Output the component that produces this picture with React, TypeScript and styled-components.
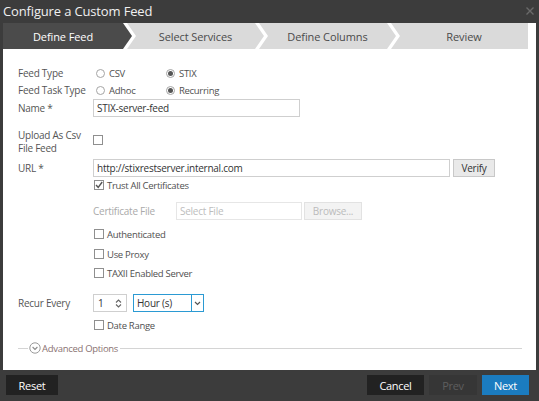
import React from "react";
import styled, { createGlobalStyle } from "styled-components";

const GlobalStyle = createGlobalStyle`
  html, body {
    margin: 0;
    padding: 0;
    background: #3c3c3c;
    font-family: "Open Sans", "Liberation Sans", sans-serif;
  }
`;

const Dialog = styled.div`
  width: 539px;
  height: 401px;
  background: #3c3c3c;
  display: flex;
  flex-direction: column;
  overflow: hidden;
`;

const TitleBar = styled.div`
  height: 23px;
  display: flex;
  align-items: center;
  justify-content: space-between;
  padding: 0 5px 1px 3px;
  box-sizing: border-box;
  color: #f0f0f0;
  font-size: 13px;
  letter-spacing: -0.15px;
`;

const Frame = styled.div`
  flex: 1;
  margin: 0 3px;
  background: #fff;
  display: flex;
  flex-direction: column;
`;

const Tabs = styled.div`
  height: 26px;
  margin-right: 8px;
  display: flex;
`;

const Tab = styled.div<{ $active?: boolean; $first?: boolean; $last?: boolean }>`
  flex: ${(p) => (p.$first ? "0 0 129px" : "0 0 137px")};
  margin-left: ${(p) => (p.$first ? "0" : "-5px")};
  background: ${(p) => (p.$active ? "#4b4b4b" : "#dadada")};
  color: ${(p) => (p.$active ? "#fff" : "#4a4a4a")};
  font-size: 11px;
  letter-spacing: -0.1px;
  display: flex;
  align-items: center;
  justify-content: center;
  padding-left: ${(p) => (p.$first ? "0" : "9px")};
  padding-right: ${(p) => (p.$last ? "0" : "9px")};
  box-sizing: border-box;
  clip-path: ${(p) =>
    p.$first
      ? "polygon(0 0, calc(100% - 9px) 0, 100% 50%, calc(100% - 9px) 100%, 0 100%)"
      : p.$last
      ? "polygon(0 0, 100% 0, 100% 100%, 0 100%, 9px 50%)"
      : "polygon(0 0, calc(100% - 9px) 0, 100% 50%, calc(100% - 9px) 100%, 0 100%, 9px 50%)"};
`;

const Form = styled.div`
  padding: 0 14px 0 15px;
  display: flex;
  flex-direction: column;
  font-size: 10px;
  letter-spacing: -0.25px;
  color: #555;
`;

const Row = styled.div<{ $mt: number; $h: number }>`
  display: flex;
  align-items: center;
  margin-top: ${(p) => p.$mt}px;
  height: ${(p) => p.$h}px;
`;

const Label = styled.div`
  width: 75px;
  flex: 0 0 75px;
  line-height: 13px;
  white-space: nowrap;
`;

const Indent = styled.div`
  width: 75px;
  flex: 0 0 75px;
`;

const RadioOption = styled.label<{ $w?: number }>`
  display: flex;
  align-items: center;
  gap: 4px;
  width: ${(p) => (p.$w ? `${p.$w}px` : "auto")};
  margin-left: 3px;
  font-size: 9.5px;
  letter-spacing: -0.3px;
  color: #505050;
`;

const RadioDot = styled.span<{ $on?: boolean }>`
  width: 9px;
  height: 9px;
  border-radius: 50%;
  border: 1px solid #a5a5a5;
  box-sizing: border-box;
  display: flex;
  align-items: center;
  justify-content: center;
  &::after {
    content: "";
    width: 5px;
    height: 5px;
    border-radius: 50%;
    background: ${(p) => (p.$on ? "#555" : "transparent")};
  }
`;

const CheckOption = styled.label`
  display: flex;
  align-items: center;
  gap: 2px;
  margin-left: 1px;
  white-space: nowrap;
  font-size: 9.5px;
  letter-spacing: -0.3px;
  color: #505050;
`;

const MutedLabel = styled.div`
  width: 83px;
  white-space: nowrap;
  color: #aaa;
`;

const Box = styled.span<{ $lift?: number }>`
  width: 10px;
  height: 10px;
  border: 1px solid #8f8f8f;
  box-sizing: border-box;
  display: flex;
  align-items: center;
  justify-content: center;
  margin-right: 1px;
  margin-top: ${(p) => (p.$lift ? -p.$lift : 0)}px;
`;

const TextInput = styled.div<{ $w: number; $muted?: boolean }>`
  width: ${(p) => p.$w}px;
  height: 100%;
  box-sizing: border-box;
  border: 1px solid ${(p) => (p.$muted ? "#e6e6e6" : "#cfcfcf")};
  padding: 0 3px;
  display: flex;
  align-items: center;
  white-space: nowrap;
  color: ${(p) => (p.$muted ? "#bdbdbd" : "#333")};
`;

const Button = styled.div<{ $w: number; $disabled?: boolean }>`
  width: ${(p) => p.$w}px;
  height: 100%;
  box-sizing: border-box;
  margin-left: ${(p) => (p.$disabled ? 2 : 3)}px;
  border: 1px solid ${(p) => (p.$disabled ? "#e2e2e2" : "#c8c8c8")};
  background: ${(p) => (p.$disabled ? "#f3f3f3" : "#e9e9e9")};
  color: ${(p) => (p.$disabled ? "#bbb" : "#333")};
  display: flex;
  align-items: center;
  justify-content: center;
`;

const Spinner = styled.div`
  width: 34px;
  height: 100%;
  box-sizing: border-box;
  border: 1px solid #cfcfcf;
  display: flex;
  align-items: center;
  justify-content: space-between;
  padding: 0 4px 0 4px;
  color: #333;
`;

const Select = styled.div`
  width: 71px;
  height: 100%;
  margin-left: 6px;
  box-sizing: border-box;
  border: 1px solid #2b9ad3;
  display: flex;
  align-items: stretch;
  color: #333;
`;

const SelectText = styled.div`
  flex: 1;
  display: flex;
  align-items: center;
  padding-left: 3px;
  border-right: 1px solid #2b9ad3;
`;

const SelectArrow = styled.div`
  width: 11px;
  display: flex;
  align-items: center;
  justify-content: center;
`;

const Divider = styled.div`
  display: flex;
  align-items: center;
  gap: 1px;
  width: 100%;
  font-size: 9.5px;
  letter-spacing: -0.3px;
  color: #8a7272;
  &::before {
    content: "";
    width: 10px;
    border-top: 1px solid #d4d4d4;
  }
  &::after {
    content: "";
    flex: 1;
    border-top: 1px solid #d4d4d4;
  }
`;

const Footer = styled.div`
  height: 31px;
  display: flex;
  align-items: flex-start;
  padding: 5px 10px 0 6px;
  box-sizing: border-box;
  gap: 5px;
`;

const FootButton = styled.div<{ $w: number; $kind?: "dark" | "off" | "primary" }>`
  width: ${(p) => p.$w}px;
  height: 20px;
  display: flex;
  align-items: center;
  justify-content: center;
  font-size: 11px;
  letter-spacing: -0.3px;
  background: ${(p) =>
    p.$kind === "primary" ? "#1b7cc0" : p.$kind === "off" ? "#363636" : "#222"};
  color: ${(p) => (p.$kind === "off" ? "#5e5e5e" : "#fff")};
`;

const Spacer = styled.div`
  flex: 1;
`;

const Check = () => (
  <svg width="8" height="8" viewBox="0 0 8 8">
    <path d="M1 4 L3.2 6.3 L7.2 1" fill="none" stroke="#555" strokeWidth="1.4" />
  </svg>
);

const Checkbox = ({ on, text }: { on?: boolean; text: string }) => (
  <CheckOption>
    <Box>{on && <Check />}</Box>
    {text}
  </CheckOption>
);

const App = () => {
  return (
    <>
      <GlobalStyle />
      <Dialog>
        <TitleBar>
          <span>Configure a Custom Feed</span>
          <svg width="8" height="8" viewBox="0 0 8 8">
            <path d="M0.5 0.5 L7.5 7.5 M7.5 0.5 L0.5 7.5" stroke="#6a6a6a" strokeWidth="1.4" />
          </svg>
        </TitleBar>
        <Frame>
          <Tabs>
            <Tab $first $active>Define Feed</Tab>
            <Tab>Select Services</Tab>
            <Tab>Define Columns</Tab>
            <Tab $last>Review</Tab>
          </Tabs>
          <Form>
            <Row $mt={16} $h={16}>
              <Label>Feed Type</Label>
              <RadioOption $w={67}>
                <RadioDot />
                CSV
              </RadioOption>
              <RadioOption>
                <RadioDot $on />
                STIX
              </RadioOption>
            </Row>
            <Row $mt={1} $h={16}>
              <Label>Feed Task Type</Label>
              <RadioOption $w={67}>
                <RadioDot />
                Adhoc
              </RadioOption>
              <RadioOption>
                <RadioDot $on />
                Recurring
              </RadioOption>
            </Row>
            <Row $mt={1} $h={18}>
              <Label>Name *</Label>
              <TextInput $w={207}>STIX-server-feed</TextInput>
            </Row>
            <Row $mt={12} $h={26}>
              <Label>
                Upload As Csv
                <br />
                File Feed
              </Label>
              <Box $lift={4} />
            </Row>
            <Row $mt={4} $h={18}>
              <Label>URL *</Label>
              <TextInput $w={357}>http://stixrestserver.internal.com</TextInput>
              <Button $w={42}>Verify</Button>
            </Row>
            <Row $mt={1} $h={14}>
              <Indent />
              <Checkbox on text="Trust All Certificates" />
            </Row>
            <Row $mt={10} $h={18}>
              <Indent />
              <MutedLabel>Certificate File</MutedLabel>
              <TextInput $w={126} $muted>
                Select File
              </TextInput>
              <Button $w={58} $disabled>
                Browse...
              </Button>
            </Row>
            <Row $mt={7} $h={14}>
              <Indent />
              <Checkbox text="Authenticated" />
            </Row>
            <Row $mt={6} $h={14}>
              <Indent />
              <Checkbox text="Use Proxy" />
            </Row>
            <Row $mt={5} $h={14}>
              <Indent />
              <Checkbox text="TAXII Enabled Server" />
            </Row>
            <Row $mt={14} $h={18}>
              <Label>Recur Every</Label>
              <Spinner>
                <span>1</span>
                <svg width="7" height="9" viewBox="0 0 7 9">
                  <path d="M1 3.5 L3.5 1 L6 3.5 M1 5.5 L3.5 8 L6 5.5" fill="none" stroke="#666" strokeWidth="1.1" />
                </svg>
              </Spinner>
              <Select>
                <SelectText>Hour (s)</SelectText>
                <SelectArrow>
                  <svg width="7" height="5" viewBox="0 0 7 5">
                    <path d="M1 1 L3.5 3.5 L6 1" fill="none" stroke="#555" strokeWidth="1.2" />
                  </svg>
                </SelectArrow>
              </Select>
            </Row>
            <Row $mt={6} $h={14}>
              <Indent />
              <Checkbox text="Date Range" />
            </Row>
            <Row $mt={10} $h={12}>
              <Divider>
                <svg width="12" height="12" viewBox="0 0 12 12">
                  <circle cx="6" cy="6" r="5.2" fill="none" stroke="#9a9a9a" strokeWidth="1" />
                  <path d="M3.6 5 L6 7.4 L8.4 5" fill="none" stroke="#8a8a8a" strokeWidth="1.1" />
                </svg>
                <span style={{ paddingRight: 1 }}>Advanced Options</span>
              </Divider>
            </Row>
          </Form>
        </Frame>
        <Footer>
          <FootButton $w={52}>Reset</FootButton>
          <Spacer />
          <FootButton $w={57}>Cancel</FootButton>
          <FootButton $w={48} $kind="off">
            Prev
          </FootButton>
          <FootButton $w={47} $kind="primary">
            Next
          </FootButton>
        </Footer>
      </Dialog>
    </>
  );
};

export default App;
